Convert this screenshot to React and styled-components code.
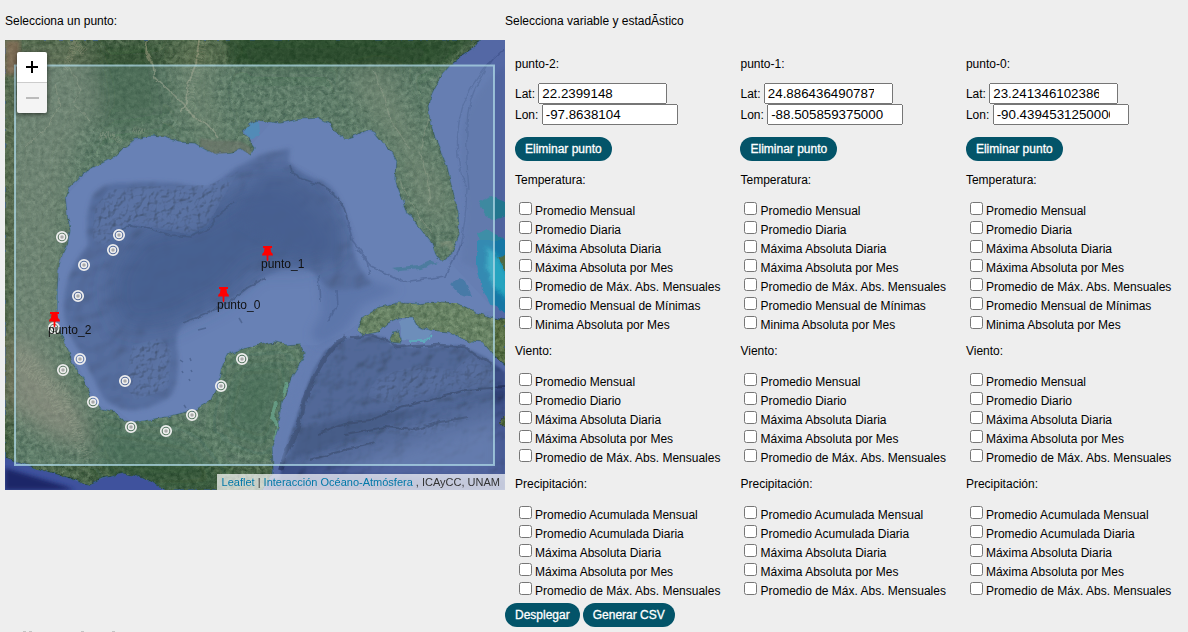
import React from 'react';
import styled, { createGlobalStyle } from 'styled-components';

const GlobalStyle = createGlobalStyle`
  html, body { margin: 0; background: #eee; height: 632px; overflow: hidden; }
  body { font: 12px "Liberation Sans", Arial, sans-serif; color: #000; }
`;

const Page = styled.main`
  display: flex;
  height: 632px;
  padding: 14px 0 0 5px;
  box-sizing: border-box;
  overflow: hidden;
`;
const MapPanel = styled.section`
  width: 500px;
  flex: none;
  display: flex;
  flex-direction: column;
`;
const FormPanel = styled.section`
  flex: 1;
  min-width: 0;
`;
const PanelTitle = styled.p`
  margin: 0 0 12px;
  line-height: 14px;
`;
const MapFrame = styled.div`
  position: relative;
  width: 500px;
  height: 450px;
  overflow: hidden;
  background: #2e3e78;
`;
const MapSvg = styled.svg`
  display: block;
  font: 12px "Liberation Sans", Arial, sans-serif;
`;
const ZoomControl = styled.div`
  position: absolute;
  left: 12px;
  top: 12px;
  width: 30px;
  border-radius: 2px;
  box-shadow: 0 1px 5px rgba(0, 0, 0, 0.65);
  overflow: hidden;
`;
const ZoomButton = styled.button`
  display: flex;
  align-items: center;
  justify-content: center;
  width: 30px;
  height: ${(p) => (p.disabled ? 30 : 31)}px;
  padding: 0;
  border: 0;
  border-bottom: ${(p) => (p.disabled ? '0' : '1px solid #ccc')};
  background: ${(p) => (p.disabled ? '#f4f4f4' : '#fff')};
  color: ${(p) => (p.disabled ? '#bbb' : '#000')};
`;
const Attribution = styled.div`
  position: absolute;
  right: 0;
  bottom: 0;
  padding: 0 5px;
  height: 16px;
  font-size: 11px;
  line-height: 16px;
  white-space: nowrap;
  color: #333;
  background: rgba(255, 255, 255, 0.7);
`;
const MapLink = styled.a`
  color: #0078a8;
`;

const Columns = styled.div`
  display: flex;
  padding-top: 17px;
  height: 545px;
`;
const Column = styled.div`
  width: 33.012%;
  box-sizing: border-box;
  padding-left: 10px;
  white-space: nowrap;
`;
const Line = styled.p`
  margin: 0 0 12px;
  line-height: 14px;
`;
const Coordinates = styled.div`
  margin-bottom: 12px;
`;
const CoordRow = styled.label`
  display: block;
  height: 21px;
`;
const CoordInput = styled.input`
  box-sizing: border-box;
  width: ${(p) => p.$width}px;
  height: 21px;
  margin: 0;
  font: 13.333px "Liberation Sans", Arial, sans-serif;
`;
const Pill = styled.button`
  display: inline-block;
  height: 24px;
  margin: 0;
  padding: 0 10px;
  border: 0;
  border-radius: 12px;
  background: #035469;
  color: #fff;
  font: 12px "Liberation Sans", Arial, sans-serif;
  -webkit-text-stroke: 0.3px #fff;
`;
const Remove = styled.div`
  display: flex;
  margin-bottom: 12px;
`;
const Group = styled.div`
  margin-bottom: 12px;
`;
const Option = styled.label`
  display: block;
  height: 19px;
`;
const Check = styled.input`
  width: 13px;
  height: 13px;
  margin: 3px 3px 3px 4px;
`;
const Actions = styled.div`
  display: flex;
  gap: 3px;
  padding-top: 1px;
`;
const NextSection = styled.div`
  position: absolute;
  left: 23px;
  top: 631px;
  display: flex;
`;
const Tip = styled.span`
  width: 3px;
  height: 1px;
  margin-right: ${(p) => p.$gap}px;
  background: #c4c4c4;
`;

const LAND = [
  'M5 40H480L475 47L463 55L450 65L440 77L432 93L428 107L430 123L437 143L447 167L453 193L458 213L459 235L455 245L450 255L442 261L437 257L432 243L423 232L415 222L408 212L401 195L396 182L397 160L393 153L385 145L375 132L368 129L355 135L345 139L338 134L330 124L318 118L300 119L280 123L258 120L249 124L241 131L250 141L255 148L250 155L240 148L232 153L215 154L205 149L195 143L180 142L165 137L150 136L135 139L124 147L115 156L100 164L85 172L70 186L65 197L67 215L70 230L67 246L61 258L58 270L57 290L57 310L56 323L62 338L68 350L72 363L82 377L88 390L93 403L102 409L115 412L125 422L133 423L150 420L167 417L183 413L197 409L212 400L218 387L222 367L227 355L243 349L260 345L275 342L287 345L300 344L305 353L300 363L292 375L288 387L282 403L278 427L272 447L273 473L262 490H165L158 485L143 477L123 473L103 478L87 485L67 477L33 467L5 457Z',
  'M358 330L362 318L377 308L397 303L417 304L437 302L457 303L477 313L493 318L505 320V365L495 357L483 342L463 340L450 332L430 330L417 325L413 318L400 317L387 323L377 332L363 335Z',
  'M390 339L393 333L398 332L402 338L400 344L392 343Z',
  'M498 423L505 416V427Z',
];

const SHELF =
  'M67 195L90 170L125 147L150 134H200L245 152L275 118L320 115L350 138L375 130L398 160L402 195L432 245L450 262L495 310L470 315L430 300L390 303L365 318L350 330L318 345L304 345H262L228 352L220 370L218 395L200 408L133 423L118 411L98 405L86 380L72 356L60 335L56 310L58 270L68 245Z';

const BASIN =
  'M88 245Q84 215 92 197Q102 181 125 183Q170 179 206 189Q222 180 235 168L262 154L290 148L289 162Q300 175 322 181Q335 187 344 208L352 235Q352 258 365 275L372 284Q352 292 330 290L311 271Q288 264 265 277L250 287Q220 310 187 321Q172 332 178 353Q180 380 172 395Q150 412 128 410Q111 407 103 398L91 374L80 352Q61 325 64 300Q66 270 88 245Z';

const CARIBBEAN =
  'M345 338L370 335L385 337L392 345L415 347L460 345L486 357L505 372V490H277L288 440L300 405L312 370L325 350Z';

const STATIONS = [
  [62, 237], [119, 235], [113, 250], [84, 265], [78, 296], [54, 328],
  [80, 359], [63, 370], [125, 381], [93, 402], [131, 427], [166, 431],
  [192, 415], [221, 386], [242, 359],
];
const PINS = [
  { name: 'punto_2', x: 54.5, y: 312 },
  { name: 'punto_1', x: 267.5, y: 246 },
  { name: 'punto_0', x: 223.5, y: 287 },
];

function GulfMap() {
  return (
    <MapSvg width="500" height="450" viewBox="5 40 500 450">
      <defs>
        <filter id="terrain" x="0" y="0" width="100%" height="100%" colorInterpolationFilters="sRGB">
          <feTurbulence type="fractalNoise" baseFrequency="0.22" numOctaves="4" seed="8" result="n" />
          <feColorMatrix in="n" values="0.5 0 0 0 0  0.48 0 0 0 0.01  0.44 0 0 0 0.03  0 0 0 0 1" result="grain" />
          <feComposite in="SourceGraphic" in2="grain" operator="arithmetic" k2="1" k3="0.7" k4="-0.175" result="mix" />
          <feComposite in="mix" in2="SourceAlpha" operator="in" />
        </filter>
        <filter id="relief" x="0" y="0" width="100%" height="100%" colorInterpolationFilters="sRGB">
          <feTurbulence type="fractalNoise" baseFrequency="0.05 0.06" numOctaves="4" seed="21" result="n" />
          <feDiffuseLighting in="n" surfaceScale="4" diffuseConstant="1.25" lightingColor="#fff" result="light">
            <feDistantLight azimuth="225" elevation="55" />
          </feDiffuseLighting>
          <feComposite in="SourceGraphic" in2="light" operator="arithmetic" k1="0.6" k2="0.4" result="lit" />
          <feComposite in="lit" in2="SourceAlpha" operator="in" />
        </filter>
        <filter id="pebble" x="0" y="0" width="100%" height="100%" colorInterpolationFilters="sRGB">
          <feTurbulence type="fractalNoise" baseFrequency="0.16" numOctaves="3" seed="11" result="n" />
          <feDiffuseLighting in="n" surfaceScale="2.6" diffuseConstant="1.22" lightingColor="#fff" result="light">
            <feDistantLight azimuth="225" elevation="55" />
          </feDiffuseLighting>
          <feComposite in="SourceGraphic" in2="light" operator="arithmetic" k1="0.8" k2="0.2" result="lit" />
          <feGaussianBlur in="SourceAlpha" stdDeviation="4" result="edge" />
          <feComposite in="lit" in2="edge" operator="in" />
        </filter>
        <filter id="soft"><feGaussianBlur stdDeviation="2" /></filter>
        <filter id="edge"><feGaussianBlur stdDeviation="1.2" /></filter>
        <filter id="blend" x="-20%" y="-20%" width="140%" height="140%"><feGaussianBlur stdDeviation="5" /></filter>
        <filter id="wide" x="-30%" y="-30%" width="160%" height="160%"><feGaussianBlur stdDeviation="11" /></filter>
        <filter id="rough">
          <feTurbulence type="fractalNoise" baseFrequency="0.12" numOctaves="3" seed="4" />
          <feDisplacementMap in="SourceGraphic" scale="5" xChannelSelector="R" yChannelSelector="G" />
        </filter>
        <clipPath id="landClip">
          {LAND.map((d) => <path key={d} d={d} />)}
        </clipPath>
      </defs>

      <rect x="5" y="40" width="500" height="450" fill="#5468a5" />
      <path d="M505 65Q470 95 463 128Q460 165 467 205Q465 230 462 262L505 280Z" fill="#4f639f" filter="url(#soft)" />
      <path d="M503 50Q462 85 458 130Q455 165 467 188Q466 225 459 250M494 58Q467 92 467 126Q466 160 469 190" fill="none" stroke="#374b82" strokeWidth="1.3" opacity="0.5" filter="url(#rough)" />

      <g filter="url(#edge)">
        <g filter="url(#relief)">
          <path d={CARIBBEAN} fill="#3a4d85" />
        </g>
      </g>
      <g filter="url(#pebble)" opacity="0.5">
        <path d="M365 395L380 375L420 365L455 370L470 355L495 372V385L440 392L390 405ZM385 432L440 418L460 420L455 430L420 436Z" fill="#485b95" />
      </g>
      <path d="M300 430Q360 412 400 411T505 388V396Q440 402 400 420T290 460Z" fill="#22315f" opacity="0.5" filter="url(#soft)" />
      <path d="M318 434L345 424L370 421L400 407L435 399L465 390L505 387M310 460L345 450L376 443M345 434L385 427L415 430L440 422L468 417" fill="none" stroke="#1b284c" strokeWidth="2.2" opacity="0.6" filter="url(#rough)" />
      <path d="M345 336L335 346L324 359L314 377L305 399L301 417L294 437L285 455L280 470" fill="none" stroke="#202d56" strokeWidth="4.5" opacity="0.65" filter="url(#rough)" />
      <path d="M330 335L318 348L309 368L298 389L291 414L282 441L280 460" fill="none" stroke="#5267a4" strokeWidth="9" opacity="0.75" filter="url(#soft)" />
      <path d="M350 338L372 335L386 340L397 347L440 345L465 347L492 365" fill="none" stroke="#212f57" strokeWidth="2.5" opacity="0.6" filter="url(#rough)" />
      <path d="M385 450L505 412V490H280Z" fill="#5f72ae" opacity="0.65" filter="url(#wide)" />
      <path d="M265 480L330 474L505 480V490H265Z" fill="#2d3e80" opacity="0.6" filter="url(#soft)" />

      <path d={SHELF} fill="#576ca9" />
      <g filter="url(#blend)">
        <path d="M318 275L345 265L370 280L400 290L362 305L345 330L322 345L310 335L322 312Z" fill="#465a98" opacity="0.8" />
      </g>
      <g filter="url(#soft)">
        <g filter="url(#relief)"><path d={BASIN} fill="#40548f" /></g>
      </g>
      <path d="M145 230Q205 225 240 190L290 185L325 225L340 250L305 265L255 265L225 297L170 325L125 330Q90 280 145 230Z" fill="#2b3f78" opacity="0.8" filter="url(#wide)" />
      <path d="M262 170L290 172L325 190L340 225L340 262L300 258L235 220Z" fill="#2d427c" opacity="0.6" filter="url(#blend)" />
      <g filter="url(#pebble)" opacity="0.65">
        <path d="M95 208L108 190L147 186L209 185L240 170L228 189L208 225L190 235L160 229L130 224L105 245L92 240ZM132 345L160 338L172 350L168 390L135 400L125 385Z" fill="#4b5f99" />
      </g>
      <path d="M118 232L130 226L149 229L171 235L191 237L208 229L218 215L233 203M290 165L292 173L303 179L321 185L335 194L344 208L348 220M265 278L247 288L232 300L207 313L184 323" fill="none" stroke="#253662" strokeWidth="1.7" opacity="0.65" filter="url(#rough)" />
      <path d="M318 276L320 301M336 291L337 306L328 322M348 220L352 240L366 258L370 275M357 250L371 266L403 282L445 276L463 242" fill="none" stroke="#293b70" strokeWidth="1.6" opacity="0.5" filter="url(#rough)" />
      <path d="M180 360l3 2m7-4l1 3m-9 10l1 2m8-3l1 2m-3 7l1 2m-6 24l2 3M198 330l8-2m33-10l3 5" fill="none" stroke="#2c3f70" strokeWidth="1.5" opacity="0.7" />

      <path d="M5 457L33 467L67 477L87 485L103 478L123 473L143 477L158 485L162 490H5Z" fill="#3f529d" />
      <path d="M5 468L35 477L65 486L75 490H5Z" fill="#1b2768" filter="url(#soft)" />

      <g filter="url(#rough)">
        <path d="M247 122L259 120L260 134L250 140L243 131Z" fill="#3a78ac" />
        <path d="M480 202L490 196L508 203V216L492 220L484 214Z" fill="#23768f" />
        <path d="M477 234L487 229L508 242V250H482Z" fill="#237b98" />
        <path d="M477 240H508V314L490 304L482 288L477 266Z" fill="#1577a5" />
        <path d="M486 246L498 256L508 275V300L493 286L486 266Z" fill="#25a4c0" filter="url(#soft)" />
        <path d="M498 258L508 251V274Z" fill="#4f6a43" />
        <path d="M450 284L459 279L465 281L472 297L459 294Z" fill="#2e6398" />
        <path d="M391 268L400 271L421 269L438 263L430 260L419 265Z" fill="#34668e" />
        <path d="M399 320L413 318L418 327L432 332L425 342L403 339Z" fill="#5d7bb0" />
        <path d="M409 341L425 341L432 335" fill="none" stroke="#48a9b4" strokeWidth="1.6" />
      </g>

      <g filter="url(#rough)">
        <g fill="none" stroke="#365f78" strokeWidth="1.6">
          {LAND.slice(0, 3).map((d) => <path key={d} d={d} />)}
        </g>
        <g filter="url(#terrain)">
          {LAND.map((d, i) => <path key={d} d={d} fill={i ? '#566d44' : '#4a6549'} />)}
        </g>
      </g>
      <g clipPath="url(#landClip)">
        <g filter="url(#wide)">
          <path d="M5 40H85L100 95L72 160L60 240V390L5 350Z" fill="#7d7f6c" opacity="0.4" />
          <path d="M5 325L50 375L80 405L85 450L40 430L5 405Z" fill="#94836f" opacity="0.6" />
          <path d="M175 40H225L210 90L225 135L200 140L185 105Z" fill="#7b8062" opacity="0.35" />
          <path d="M345 80L390 70L420 150L445 180L450 240L415 205L398 150Z" fill="#757f62" opacity="0.45" />
          <path d="M225 40H460L420 70H245ZM85 50L160 44L170 120L100 130Z" fill="#1d4424" opacity="0.5" />
          <path d="M235 365L295 360L270 450L220 430ZM75 420L190 440L230 490H120Z" fill="#1f4a2b" opacity="0.5" />
        </g>
        <path d="M225 34H480L440 64H230Z" fill="#1c4224" opacity="0.4" filter="url(#soft)" />
        <path d="M200 138L212 140L240 141L252 148L250 156L232 154L215 155L200 148Z" fill="#615c4c" opacity="0.6" filter="url(#edge)" />
        <g fill="none" stroke="#a3a184" filter="url(#rough)">
          <path d="M147 40L146 52L153 65L155 78L170 91L182 103L193 116L207 124L218 137M199 40L196 64L188 84L187 103L180 112" strokeWidth="1.6" opacity="0.55" />
          <path d="M203 42L197 65L192 82L188 104L196 115" strokeWidth="9" strokeDasharray="1 2" opacity="0.24" />
          <path d="M20 366L43 381L66 390L64 408L74 421L79 441L86 459M17 354L35 364L50 390L61 415" strokeWidth="10" strokeDasharray="1 2" opacity="0.3" />
          <path d="M430 116L423 138L420 155L427 177L430 204M374 70L383 94L390 119L410 149M400 181L416 211L432 234M55 85L60 106L48 127L25 147M70 68L81 90L73 104L90 120" strokeWidth="1" opacity="0.38" />
          <path d="M100 135L115 136L120 142M132 130L145 132M65 70L75 45L85 52" strokeWidth="7" strokeDasharray="1 1" opacity="0.35" />
        </g>
        <path d="M5 40H20V75H5Z" fill="#a4705c" opacity="0.5" filter="url(#soft)" />
        <path d="M276 403L272 418L278 425L276 440M287 381L284 397" fill="none" stroke="#5d9f7c" strokeWidth="4" opacity="0.7" filter="url(#rough)" />
        <path d="M440 245L449 242L452 250" fill="none" stroke="#8d8a6d" strokeWidth="5" opacity="0.4" filter="url(#edge)" />
      </g>

      <rect x="15" y="65.5" width="479" height="399.5" fill="#add8e6" fillOpacity="0.2" stroke="#add8e6" strokeOpacity="0.75" strokeWidth="2" />

      {STATIONS.map(([x, y]) => (
        <g key={`${x}-${y}`} transform={`translate(${x} ${y})`} fill="none" stroke="#eee">
          <circle r="5.2" strokeWidth="1.7" />
          <circle r="2.5" strokeWidth="1.5" fill="#aaa" />
        </g>
      ))}
      {PINS.map(({ name, x, y }) => (
        <g key={name} transform={`translate(${x} ${y})`}>
          <path d="M-4.5 0H4.5V2H3L3.5 6Q5.5 7 5.5 9.5H0.9V14L0 15.5L-0.9 14V9.5H-5.5Q-5.5 7-3.5 6L-3 2H-4.5Z" fill="#f00" />
          <text x="-6.5" y="22" fill="#111">{name}</text>
        </g>
      ))}
    </MapSvg>
  );
}

const POINTS = [
  { name: 'punto-2', lat: '22.2399148', lon: '-97.8638104' },
  { name: 'punto-1', lat: '24.886436490787', lon: '-88.505859375000' },
  { name: 'punto-0', lat: '23.241346102386', lon: '-90.4394531250000' },
];
const COMMON = ['Máxima Absoluta Diaria', 'Máxima Absoluta por Mes', 'Promedio de Máx. Abs. Mensuales'];
const VARIABLES = [
  { title: 'Temperatura:', options: ['Promedio Mensual', 'Promedio Diaria', ...COMMON, 'Promedio Mensual de Mínimas', 'Minima Absoluta por Mes'] },
  { title: 'Viento:', options: ['Promedio Mensual', 'Promedio Diario', ...COMMON] },
  { title: 'Precipitación:', options: ['Promedio Acumulada Mensual', 'Promedio Acumulada Diaria', ...COMMON] },
];

function PointColumn({ point }) {
  return (
    <Column>
      <Line>{point.name}:</Line>
      <Coordinates>
        <CoordRow>Lat: <CoordInput type="number" step="any" $width={129} defaultValue={point.lat} /></CoordRow>
        <CoordRow>Lon: <CoordInput type="number" step="any" $width={136.2} defaultValue={point.lon} /></CoordRow>
      </Coordinates>
      <Remove><Pill>Eliminar punto</Pill></Remove>
      {VARIABLES.map(({ title, options }) => (
        <React.Fragment key={title}>
          <Line>{title}</Line>
          <Group>
            {options.map((o) => <Option key={o}><Check type="checkbox" />{o}</Option>)}
          </Group>
        </React.Fragment>
      ))}
    </Column>
  );
}

export default function App() {
  return (
    <>
      <GlobalStyle />
      <Page>
        <MapPanel>
          <PanelTitle>Selecciona un punto:</PanelTitle>
          <MapFrame>
            <GulfMap />
            <ZoomControl>
              <ZoomButton aria-label="Acercar">
                <svg width="14" height="14"><path d="M1 7H13M7 1V13" stroke="currentColor" strokeWidth="2" /></svg>
              </ZoomButton>
              <ZoomButton disabled aria-label="Alejar">
                <svg width="14" height="14"><path d="M1 7H14" stroke="currentColor" strokeWidth="2" /></svg>
              </ZoomButton>
            </ZoomControl>
            <Attribution>
              <MapLink>Leaflet</MapLink> | <MapLink>Interacción Océano-Atmósfera</MapLink> , ICAyCC, UNAM
            </Attribution>
          </MapFrame>
        </MapPanel>
        <FormPanel>
          <PanelTitle>Selecciona variable y estadÃstico</PanelTitle>
          <Columns>
            {POINTS.map((p) => <PointColumn key={p.name} point={p} />)}
          </Columns>
          <Actions>
            <Pill>Desplegar</Pill>
            <Pill>Generar CSV</Pill>
          </Actions>
        </FormPanel>
      </Page>
      <NextSection>
        <Tip $gap={3} /><Tip $gap={49} /><Tip $gap={28} /><Tip $gap={0} />
      </NextSection>
    </>
  );
}
